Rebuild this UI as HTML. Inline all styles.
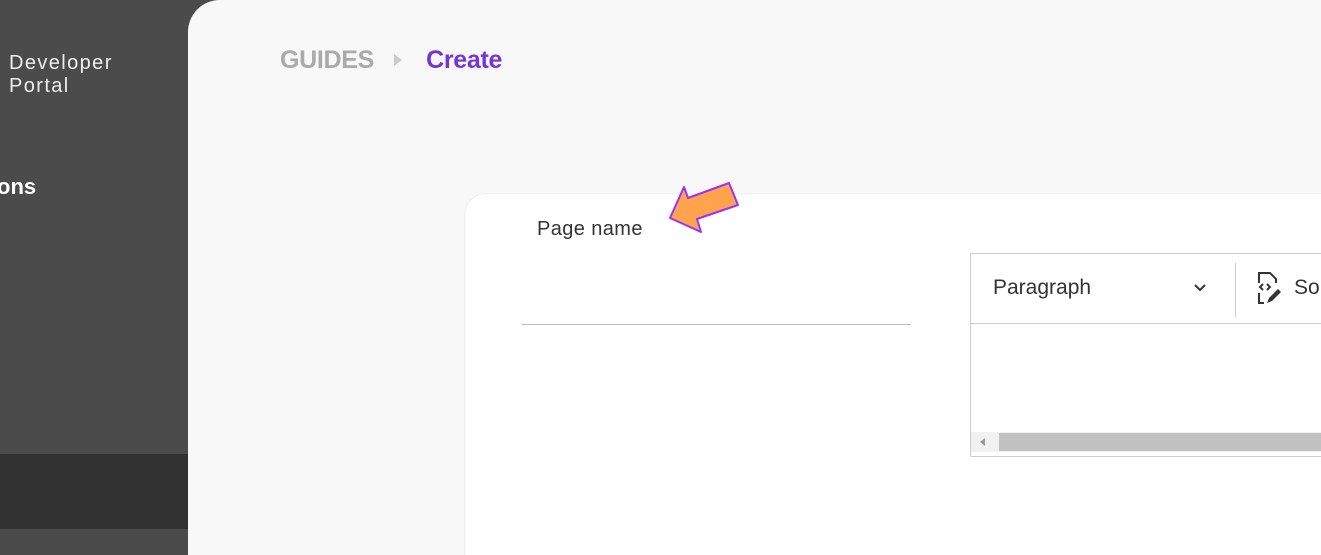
<!DOCTYPE html>
<html><head><style>
html,body{margin:0;width:1321px;height:555px;overflow:hidden}
body{background:#4b4b4b;font-family:"Liberation Sans",sans-serif;position:relative}
.band{position:absolute;left:0;top:454px;width:188px;height:75px;background:#313131}
.logo{position:absolute;left:9px;top:52px;color:#eee;font-size:20px;line-height:23px;letter-spacing:1.4px}
.ons{position:absolute;left:-3px;top:174px;color:#fff;font-weight:bold;font-size:22px}
.main{position:absolute;left:188px;top:0;width:1133px;height:555px;background:#f8f8f8;border-top-left-radius:32px;overflow:hidden}
.bc{position:absolute;left:92px;top:46px;font-size:25px;font-weight:bold;letter-spacing:-0.3px}
.card{position:absolute;left:276px;top:193px;width:900px;height:361px;background:#fff;border:1px solid #eee;border-bottom:none;border-radius:22px 22px 0 0}
.lbl{position:absolute;left:72px;top:24px;font-size:20px;color:#333;letter-spacing:0.4px}
.line{position:absolute;left:57px;top:130px;width:389px;border-top:1px solid #bbb}
.ed{position:absolute;left:505px;top:59px;width:500px;height:202px;border:1px solid #ccc;border-radius:2px}
.tb{height:69px;border-bottom:1px solid #ccc;position:relative}
</style></head><body>
<div class="band"></div>
<div class="logo">Developer<br>Portal</div>
<div class="ons">ons</div>
<div class="main">
<div class="bc"><span style="color:#aaa">GUIDES</span><span style="display:inline-block;width:0;height:0;border-left:8px solid #ccc;border-top:6px solid transparent;border-bottom:6px solid transparent;margin:0 24px 2px 20px"></span><span style="color:#7435d8">Create</span></div>
<div class="card">
<div class="lbl">Page name</div>
<div class="line"></div>
<div class="ed">
<div class="tb">
<span style="position:absolute;left:22px;top:22px;font-size:21px;color:#333">Paragraph</span>
<svg style="position:absolute;left:222px;top:29px" width="14" height="10"><path d="M2 2l5 5 5-5" stroke="#333" stroke-width="2" fill="none"/></svg>
<div style="position:absolute;left:264px;top:9px;height:54px;border-left:1px solid #ccc"></div>
<svg style="position:absolute;left:282px;top:15px" width="36" height="38" viewBox="0 0 36 38"><path d="M6 14V4h11l6 6v4M6 24v10h5M10 21l-3-3 3-3M14 21l3-3-3-3" stroke="#333" stroke-width="2" fill="none"/><path d="M14 34l2-5 9-9 3 3-9 9z" fill="#333"/></svg>
<span style="position:absolute;left:323px;top:22px;font-size:21px;color:#333">So</span>
</div>
<div style="position:absolute;left:0;top:178px;width:500px;height:20px;background:#f1f1f1"><div style="position:absolute;left:28px;top:1px;right:0;height:18px;background:#c1c1c1"></div><div style="position:absolute;left:9px;top:6px;border-right:5px solid #999;border-top:4px solid transparent;border-bottom:4px solid transparent"></div></div>
</div>
</div>
</div>
<svg style="position:absolute;left:0;top:0" width="1321" height="555"><polygon points="670,218 684,187 688,198 729,183 738,205 697,219 701,232" fill="#ffa34d" stroke="#9b30ff" stroke-width="2" stroke-linejoin="round"/></svg>
</body></html>
